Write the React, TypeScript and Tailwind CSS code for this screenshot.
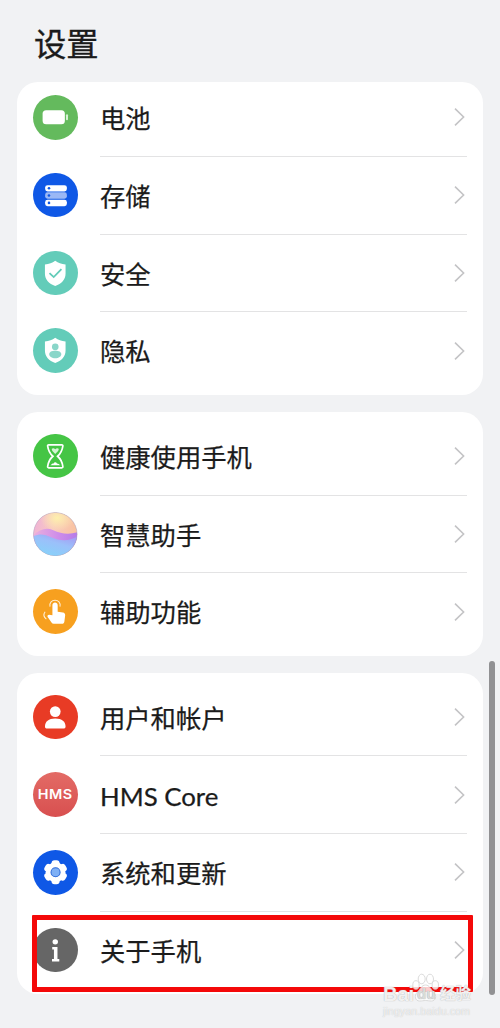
import React from 'react';

const Chevron: React.FC = () => (
  <svg className="h-[20px] w-[12px] shrink-0" viewBox="0 0 12 20" fill="none" stroke="#c4c4c6" strokeWidth={1.6}>
    <path d="M2 1.6l8.6 8.4L2 18.4" />
  </svg>
);

const BatteryIcon: React.FC = () => (
  <svg className="size-full" viewBox="0 0 44 44">
    <rect x="9.5" y="15" width="22" height="14" rx="3.5" fill="#fff" />
    <rect x="32.6" y="19" width="2" height="6" rx="1" fill="#d9f0d8" />
  </svg>
);

const StorageIcon: React.FC = () => (
  <svg className="size-full" viewBox="0 0 44 44">
    <rect x="12" y="12" width="21.5" height="6.2" rx="2.4" fill="#fff" />
    <rect x="12" y="19" width="21.5" height="6.4" rx="2.4" fill="#9bb8f5" />
    <rect x="12" y="26.4" width="21.5" height="6.4" rx="2.4" fill="#fff" />
    <circle cx="15.8" cy="15.1" r="1.3" fill="#0f58e6" />
    <circle cx="15.8" cy="22.2" r="1.3" fill="#0f58e6" />
    <circle cx="15.8" cy="29.6" r="1.3" fill="#0f58e6" />
  </svg>
);

const Shield: React.FC = () => (
  <path d="M22 9.6c3 2.2 6 3.2 10.2 3.7v8.9c0 6-4 10.1-10.2 12.3-6.2-2.2-10.2-6.3-10.2-12.3v-8.9C16 12.8 19 11.8 22 9.6z" fill="#fff" />
);

const SafetyIcon: React.FC = () => (
  <svg className="size-full" viewBox="0 0 44 44">
    <Shield />
    <path d="M16.3 21.8l4.2 4 7.6-7.8" fill="none" stroke="#63ccb9" strokeWidth={1.8} />
  </svg>
);

const PrivacyIcon: React.FC = () => (
  <svg className="size-full" viewBox="0 0 44 44">
    <Shield />
    <circle cx="22" cy="18.6" r="3.3" fill="#8ad6c9" />
    <path d="M16 26c0-2.5 2.5-3.6 6-3.6s6 1.1 6 3.6c0 2-2.6 4-6 4s-6-2-6-4z" fill="#8ad6c9" />
  </svg>
);

const HourglassIcon: React.FC = () => (
  <svg className="size-full" viewBox="0 0 44 44">
    <path
      d="M15.5 10.7h13c.8 0 1.200.6 1 1.300-.6 4.200-2 7.300-5.200 10 3.200 2.700 4.600 5.800 5.200 10 .2.800-.2 1.400-1 1.400h-13c-.8 0-1.200-.6-1-1.400.6-4.200 2-7.300 5.200-10-3.200-2.700-4.600-5.800-5.200-10-.2-.7.2-1.300 1-1.300z"
      fill="none"
      stroke="#fff"
      strokeWidth={1.7}
    />
    <path d="M18.6 14.7c1-.9 2.4-.6 3.4.4 1-1 2.4-1.3 3.4-.4.5 1.5-1.5 3.3-3.4 5.1-1.9-1.8-3.9-3.6-3.4-5.1z" fill="#d5f5d5" />
    <path d="M17.3 31c1.2-1.8 2.3-1.7 3-1.9.8-1.5 2.7-1.5 3.4 0 1.2.1 2.3.5 3 1.9z" fill="#fff" />
  </svg>
);

const AssistantIcon: React.FC = () => (
  <svg className="size-full" viewBox="0 0 44 44">
    <defs>
      <linearGradient id="top" x1="0" y1="0.3" x2="1" y2="0.5">
        <stop offset="0" stopColor="#efb3d6" />
        <stop offset="0.45" stopColor="#f9c9c0" />
        <stop offset="1" stopColor="#f9c29c" />
      </linearGradient>
      <linearGradient id="mid" x1="0" y1="0" x2="1" y2="0">
        <stop offset="0" stopColor="#ecb0dd" />
        <stop offset="0.6" stopColor="#cc8bea" />
        <stop offset="1" stopColor="#b57be8" />
      </linearGradient>
      <linearGradient id="low" x1="0.3" y1="1" x2="0.9" y2="0">
        <stop offset="0" stopColor="#86d3f9" />
        <stop offset="0.55" stopColor="#9bc0fa" />
        <stop offset="1" stopColor="#a795f2" />
      </linearGradient>
      <radialGradient id="glow">
        <stop offset="0" stopColor="#fdf0ad" />
        <stop offset="1" stopColor="#fdf0ad" stopOpacity="0" />
      </radialGradient>
      <clipPath id="orb">
        <circle cx="22" cy="22" r="21.6" />
      </clipPath>
    </defs>
    <g clipPath="url(#orb)">
      <rect width="44" height="44" fill="url(#top)" />
      <ellipse cx="24" cy="6" rx="17" ry="13" fill="url(#glow)" />
      <path d="M0 23c7-6 13-8 20-5 8 3.500 15 4.500 24 2V34H0z" fill="url(#mid)" />
      <path d="M0 24c7-3 12-2 18 1 9 4 18 4 26-1v20H0z" fill="url(#low)" />
    </g>
    <circle cx="22" cy="22" r="21.6" fill="none" stroke="#a99bb9" strokeWidth={0.5} />
  </svg>
);

const TouchIcon: React.FC = () => (
  <svg className="size-full" viewBox="0 0 44 44">
    <path
      d="M19.2 16c0-3.7 5.200-3.700 5.200 0v6.500l5.200.8c1.500.3 2.300 1.300 2.200 2.800l-.8 6.300c-.2 1.300-1 2-2.200 2h-8.300c-1 0-1.700-.4-2.200-1.200l-3.800-5.500c-.7-1.200.2-2.400 1.500-2.300l3.200.5z"
      fill="#fff"
    />
    <path d="M16.8 17.5c-1.8-8.5 11.8-8.5 9.9 0" fill="none" stroke="#fff" strokeWidth={1} opacity={0.85} />
    <path d="M12 22.5c-1.9 2.6-1.4 5.2 1.2 7.2" fill="none" stroke="#fff" strokeWidth={1} opacity={0.85} />
  </svg>
);

const UserIcon: React.FC = () => (
  <svg className="size-full" viewBox="0 0 44 44">
    <circle cx="22" cy="16.4" r="5.3" fill="#fff" />
    <path d="M11.8 31.5c0-5.2 3.6-8.2 10.2-8.2s10.2 3 10.2 8.2c0 .9-.5 1.500-1.400 1.500H13.200c-.9 0-1.400-.6-1.400-1.500z" fill="#fff" />
  </svg>
);

const HmsIcon: React.FC = () => (
  <svg className="size-full" viewBox="0 0 44 44">
    <text transform="translate(4.6 26.8) scale(1.15 1)" letterSpacing="0.5" fontFamily="Inter, sans-serif" fontSize="12.4" fontWeight="600" fill="#fff">
      HMS
    </text>
  </svg>
);

const GearIcon: React.FC = () => (
  <svg className="size-full" viewBox="0 0 44 44">
    <g fill="#fff">
      <circle cx="22.3" cy="22" r="9.8" />
      <rect x="18.3" y="10.2" width="8" height="23.6" rx="3" />
      <rect x="18.3" y="10.2" width="8" height="23.6" rx="3" transform="rotate(60 22.3 22)" />
      <rect x="18.3" y="10.2" width="8" height="23.6" rx="3" transform="rotate(120 22.3 22)" />
    </g>
    <circle cx="22.3" cy="22" r="4.5" fill="#7fb0f5" stroke="#2a68d8" strokeWidth={1} />
  </svg>
);

const InfoIcon: React.FC = () => (
  <svg className="size-full" viewBox="0 0 44 44" fill="#fff">
    <circle cx="22" cy="13.7" r="2.7" />
    <path d="M19 18.7h5.2v12h1.8v2.5h-7.2v-2.5h1.9v-9.5H19z" />
  </svg>
);

interface Item {
  label: string;
  color: string;
  icon: React.ReactNode;
}

const groups: Item[][] = [
  [
    { label: '电池', color: 'bg-[#64ba5d]', icon: <BatteryIcon /> },
    { label: '存储', color: 'bg-[#0f58e6]', icon: <StorageIcon /> },
    { label: '安全', color: 'bg-[#63ccb9]', icon: <SafetyIcon /> },
    { label: '隐私', color: 'bg-[#63ccb9]', icon: <PrivacyIcon /> },
  ],
  [
    { label: '健康使用手机', color: 'bg-[#45c545]', icon: <HourglassIcon /> },
    { label: '智慧助手', color: 'bg-white', icon: <AssistantIcon /> },
    { label: '辅助功能', color: 'bg-[#f7a01f]', icon: <TouchIcon /> },
  ],
  [
    { label: '用户和帐户', color: 'bg-[#e83b25]', icon: <UserIcon /> },
    { label: 'HMS Core', color: 'bg-linear-to-b from-[#e36b66] to-[#d84f4f]', icon: <HmsIcon /> },
    { label: '系统和更新', color: 'bg-[#0f58e6]', icon: <GearIcon /> },
    { label: '关于手机', color: 'bg-[#666666]', icon: <InfoIcon /> },
  ],
];

const Row: React.FC<{ item: Item; last: boolean }> = ({ item, last }) => (
  <div className="flex h-[77.75px] pr-4 pl-4">
    <div className={`mt-4 flex size-[44.5px] shrink-0 items-center justify-center overflow-hidden rounded-full ${item.color}`}>
      {item.icon}
    </div>
    <div className={`ml-[22.5px] flex flex-1 items-center justify-between border-b pr-[2px] ${last ? 'border-transparent' : 'border-[#e3e3e4]'}`}>
      <span className={`leading-none whitespace-nowrap [-webkit-text-stroke:0.25px_#1b1b1b] ${item.label === 'HMS Core' ? "pt-[5px] font-['Lato','Noto_Sans_CJK_SC',sans-serif] text-[25.8px]" : 'pt-[1px] text-[25.3px]'}`}>
        {item.label}
      </span>
      <Chevron />
    </div>
  </div>
);

const Watermark: React.FC = () => (
  <div className="absolute top-[973px] left-[383px] w-[92px] font-['Liberation_Sans','Noto_Sans_CJK_SC',sans-serif] text-white/85">
    <svg className="absolute top-0 left-[29px] h-[30px] w-[27px]" viewBox="0 0 27 30" fill="#fff" fillOpacity={0.8} stroke="#d2d2d2" strokeWidth={0.8}>
      <ellipse cx="4" cy="12" rx="3.2" ry="4.3" />
      <ellipse cx="9.7" cy="6" rx="3.5" ry="4.8" />
      <ellipse cx="18" cy="6" rx="3.5" ry="4.8" />
      <ellipse cx="23.3" cy="12" rx="3.2" ry="4.3" />
      <path d="M13.5 12c4 0 5 4 8 7 4 4 2 9-2 9-2.5 0-4-.5-6-.5s-3.5.5-6 .5c-4 0-6-5-2-9 3-3 4-7 8-7z" />
    </svg>
    <div className="flex h-[31px] items-end text-[20px] leading-[20px] font-bold [text-shadow:0_0_1px_#999999]">
      <span className="w-[34px]">Bai</span>
      <span className="relative w-[23px] text-[15px] text-[#dcdcdc]">du</span>
      <span className="text-[15.5px] whitespace-nowrap">经验</span>
    </div>
    <div className="mt-[1px] text-[10.8px] leading-[12px] whitespace-nowrap text-white/70 [text-shadow:0_0_1px_#bbbbbb]">jingyan.baidu.com</div>
  </div>
);

const App: React.FC = () => {
  return (
    <div className="relative h-[1028px] w-[500px] overflow-hidden bg-[#f1f2f4] font-['Noto_Sans_CJK_SC','Noto_Sans',sans-serif] text-[#1b1b1b]">
      <h1 className="h-[82.25px] pt-[26px] pl-[34px] text-[32.3px] leading-[32px] font-normal [-webkit-text-stroke:0.35px_#1b1b1b]">设置</h1>

      <div className="flex flex-col gap-[16.75px] px-[17px]">
        {groups.map((items, i) => (
          <div key={i} className={`overflow-hidden rounded-[21px] bg-white ${i === 0 ? 'pb-[5px]' : 'pt-[6px] pb-[4.75px]'}`}>
            <div className={i === 0 ? '-mt-[3.25px]' : ''}>
              {items.map((item, n) => (
                <Row key={item.label} item={item} last={n === items.length - 1} />
              ))}
            </div>
          </div>
        ))}
      </div>

      {/* scrollbar */}
      <div className="absolute top-[661px] right-[5px] h-[334px] w-[6px] rounded-full bg-[#919193]" />

      {/* highlighted row */}
      <div className="absolute top-[915px] left-[32px] h-[77px] w-[441px] rounded-[1px] border-5 border-[#f40909]" />

      <Watermark />
    </div>
  );
};

export default App;
